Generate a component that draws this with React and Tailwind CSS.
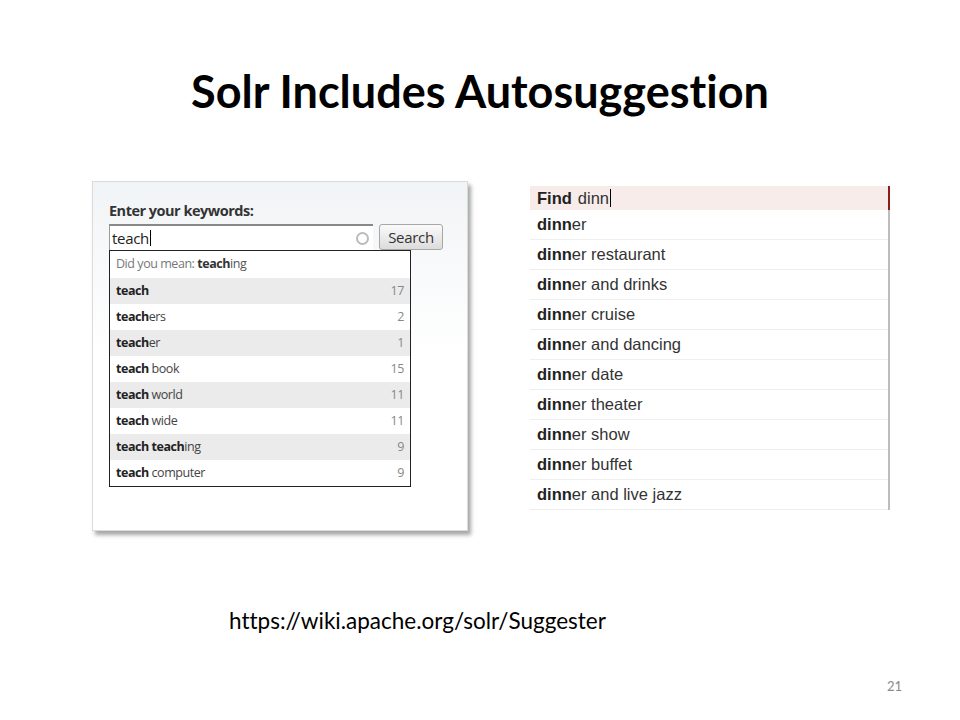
import { useState } from "react";

const teachRows = [
  { bold: "teach", rest: "", count: 17 },
  { bold: "teach", rest: "ers", count: 2 },
  { bold: "teach", rest: "er", count: 1 },
  { bold: "teach", rest: " book", count: 15 },
  { bold: "teach", rest: " world", count: 11 },
  { bold: "teach", rest: " wide", count: 11 },
  { bold: "teach teach", rest: "ing", count: 9 },
  { bold: "teach", rest: " computer", count: 9 },
];

const dinnerRows = [
  "er",
  "er restaurant",
  "er and drinks",
  "er cruise",
  "er and dancing",
  "er date",
  "er theater",
  "er show",
  "er buffet",
  "er and live jazz",
];

const KeywordBox = () => {
  const [query] = useState("teach");

  return (
    <div className="h-[350px] w-[376px] border border-[#dcdcdc] bg-gradient-to-b from-[#f1f4f6] via-white to-white shadow-[3px_4px_4px_rgba(0,0,0,0.35)]">
      <div className="pl-[16px] pt-[19px] font-['Open_Sans',sans-serif]">
        <h3 className="text-[14.5px] font-bold leading-[20px] tracking-[-0.5px] text-[#333]">
          Enter your keywords:
        </h3>

        <div className="mt-[3px] flex items-start">
          <div className="flex h-[26px] w-[264px] items-center border-t-2 border-l border-[#9a9a9a] border-t-[#888] bg-white pl-[2px] pr-[4px]">
            <span className="text-[15px] leading-none tracking-[-0.3px] text-[#222]">
              {query}
            </span>
            <span className="ml-[1px] h-[16px] w-px bg-black" />
            <span className="ml-auto h-[13px] w-[13px] rounded-full border-2 border-[#bbb]" />
          </div>
          <button
            type="button"
            className="ml-[6px] h-[26px] w-[64px] rounded-[3px] border border-[#a8a8a8] bg-gradient-to-b from-[#fafafa] to-[#dcdcdc] text-[15px] leading-none tracking-[-0.3px] text-[#333]"
          >
            Search
          </button>
        </div>

        <div className="w-[302px] border border-[#222] bg-white text-[12.5px] tracking-[-0.45px] text-[#333]">
          <div className="flex h-[27px] items-center px-[6px] text-[#777]">
            Did you mean:&nbsp;<b className="text-[#333]">teach</b>
            <span className="text-[#555]">ing</span>
          </div>
          {teachRows.map((row, i) => (
            <div
              key={row.bold + row.rest}
              className={`flex h-[26px] items-center justify-between px-[6px] ${
                i % 2 === 0 ? "bg-[#ebebeb]" : "bg-white"
              }`}
            >
              <span>
                <b className="text-[#222]">{row.bold}</b>
                <span className="text-[#444]">{row.rest}</span>
              </span>
              <span className="text-[#888]">{row.count}</span>
            </div>
          ))}
        </div>
      </div>
    </div>
  );
};

const FindList = () => {
  return (
    <div className="w-[360px] font-['Liberation_Sans',Arial,sans-serif] text-[16.5px] text-[#333]">
      <div className="flex h-[24px] items-center border-r-2 border-[#8a1c1c] bg-[#f7ecea] pl-[7px]">
        <b className="text-[#222]">Find</b>
        <span className="ml-[6px]">dinn</span>
        <span className="ml-[1px] h-[18px] w-px bg-black" />
      </div>
      <div className="border-r-2 border-[#bdbdbd]">
        {dinnerRows.map((rest) => (
          <div
            key={rest}
            className="flex h-[30px] items-center border-b border-[#eeeeee] pl-[7px]"
          >
            <b className="text-[#222]">dinn</b>
            <span>{rest}</span>
          </div>
        ))}
      </div>
    </div>
  );
};

export default function App() {
  return (
    <div className="relative h-[720px] w-[960px] bg-white">
      <h1 className="pt-[63px] text-center font-['Lato',sans-serif] text-[45px] font-bold leading-[56px] text-black [font-variant-ligatures:none]">
        Solr Includes Autosuggestion
      </h1>

      <div className="mt-[62px] flex items-start pl-[92px]">
        <KeywordBox />
        <div className="ml-[62px] mt-[5px]">
          <FindList />
        </div>
      </div>

      <p className="mt-[76px] pl-[229px] font-['Lato',sans-serif] text-[22.5px] leading-[28px] text-black [font-variant-ligatures:none]">
        https://wiki.apache.org/solr/Suggester
      </p>

      <span className="absolute left-[887px] top-[677px] font-['Lato',sans-serif] text-[13px] text-[#8a8a8a]">
        21
      </span>
    </div>
  );
}
